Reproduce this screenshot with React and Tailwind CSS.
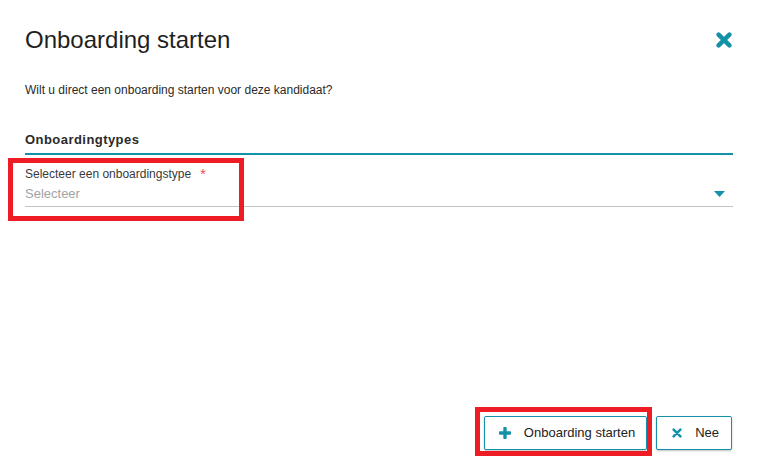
import React from "react";

function CloseIcon({ size = 16, stroke = 4.2 }) {
  return (
    <svg width={size} height={size} viewBox="0 0 16 16" className="block">
      <path d="M2.6 2.6 L13.4 13.4 M13.4 2.6 L2.6 13.4" stroke="#1391a9" strokeWidth={stroke} strokeLinecap="round" fill="none" />
    </svg>
  );
}

function PlusIcon() {
  return (
    <svg width="12" height="12" viewBox="0 0 12 12" className="block">
      <rect x="4.3" y="0" width="3.4" height="12" rx="0.8" fill="#1391a9" />
      <rect x="0" y="4.3" width="12" height="3.4" rx="0.8" fill="#1391a9" />
    </svg>
  );
}

export default function App() {
  return (
    <div className="h-[476px] w-[760px] bg-white flex flex-col pl-[25px] pr-[27px] font-['Liberation_Sans',Arial,sans-serif] text-[#222] overflow-hidden">
      <div className="flex items-center justify-between pt-[26px]">
        <h1 className="text-[24px] leading-[28px] text-[#1f1f1f]">Onboarding starten</h1>
        <div className="mr-[1px]">
          <CloseIcon size={16} stroke={4.4} />
        </div>
      </div>

      <p className="mt-[28px] text-[12px] leading-[16px] text-[#2a2a2a]">
        Wilt u direct een onboarding starten voor deze kandidaat?
      </p>

      <div className="mt-[33px] text-[13px] leading-[18px] font-bold tracking-[0.45px] text-[#2a2a2a] pb-[4px] border-b-2 border-[#1391a9]">
        Onboardingtypes
      </div>

      <div className="relative mt-[11px]">
        <div className="text-[12px] leading-[16px] text-[#3a3a3a] flex items-start">
          <span>Selecteer een onboardingstype</span>
          <span className="ml-[9px] text-[14px] leading-[16px] text-[#ee4b4b]">*</span>
        </div>
        <div className="mt-[4px] flex items-center justify-between pb-[4px] border-b border-[#c4c4c4]">
          <span className="text-[13px] leading-[16px] text-[#a3a3a3]">Selecteer</span>
          <svg width="11" height="6" viewBox="0 0 11 6" className="block mr-[8px]">
            <path d="M0 0 L11 0 L5.5 6 Z" fill="#1391a9" />
          </svg>
        </div>
        <div className="pointer-events-none absolute left-[-17px] top-[-8px] w-[236px] h-[63px] border-[5px] border-[#ee1c25]" />
      </div>

      <div className="flex-1" />

      <div className="flex justify-end gap-[9px] pb-[26px] mr-[1px]">
        <div className="relative">
          <button className="h-[34px] flex items-center gap-[13px] pl-[14px] pr-[11px] border border-[#1391a9] rounded-[2px] bg-white text-[13px] text-[#222] shadow-[0_1px_2px_rgba(0,0,0,0.25)]">
            <PlusIcon />
            <span>Onboarding starten</span>
          </button>
          <div className="pointer-events-none absolute left-[-9px] top-[-9px] w-[177px] h-[49px] border-[5px] border-[#ee1c25]" />
        </div>
        <button className="h-[34px] flex items-center gap-[13px] pl-[15px] pr-[12px] border border-[#1391a9] rounded-[2px] bg-white text-[13px] text-[#222] shadow-[0_1px_2px_rgba(0,0,0,0.25)]">
          <CloseIcon size={10} stroke={4} />
          <span>Nee</span>
        </button>
      </div>
    </div>
  );
}
